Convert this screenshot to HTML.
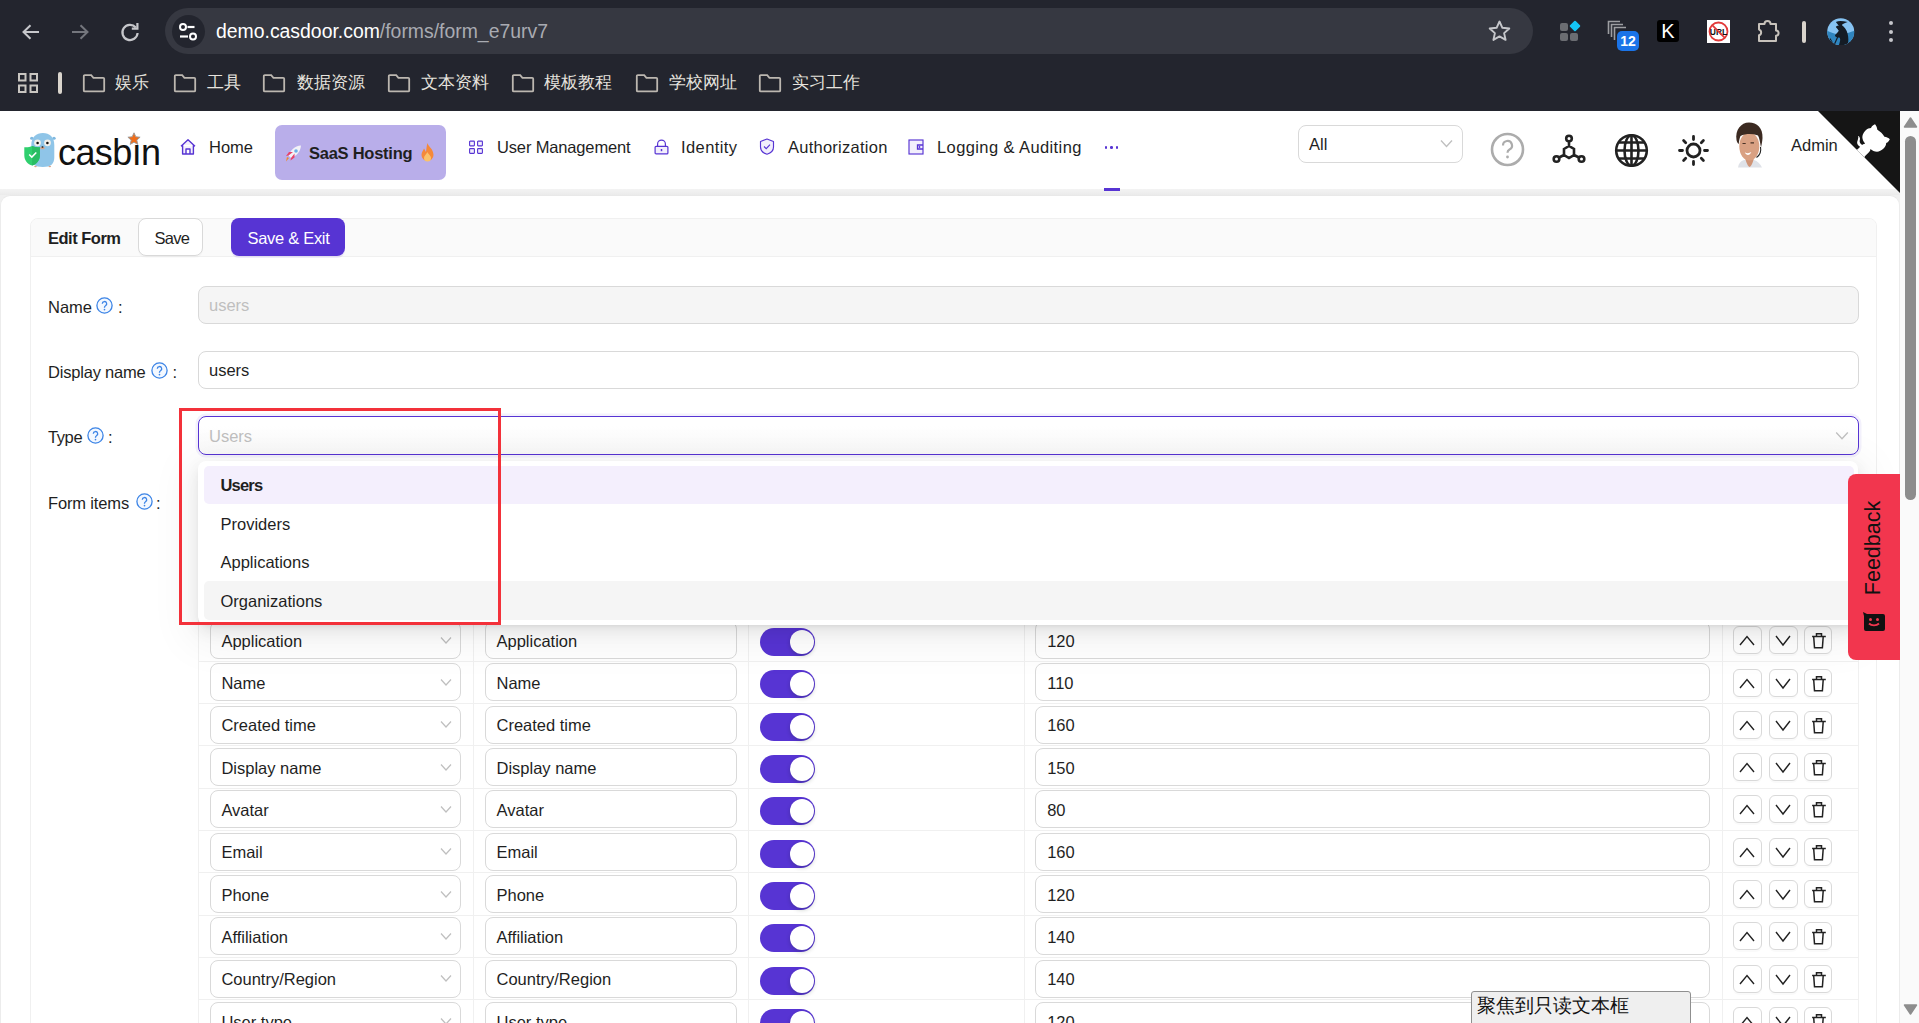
<!DOCTYPE html>
<html><head><meta charset="utf-8">
<style>
*{box-sizing:border-box;margin:0;padding:0}
html,body{width:1919px;height:1023px;overflow:hidden;background:#fff;font-family:"Liberation Sans",sans-serif;color:#1f1f1f}
.a{position:absolute}
.t{position:absolute;white-space:nowrap;line-height:1}
/* chrome */
#chrome{position:absolute;left:0;top:0;width:1919px;height:111px;background:#23252e}
#omni{position:absolute;left:165px;top:8px;width:1368px;height:46px;border-radius:23px;background:#363841}
/* page */
#page{position:absolute;left:0;top:111px;width:1900px;height:912px;background:#f0f0f0;overflow:hidden}
#hdr{position:absolute;left:0;top:0;width:1900px;height:78px;background:#fff}
#outer{position:absolute;left:0;top:84px;width:1900px;height:900px;background:#fff;border:1px solid #ececec;border-top-color:#e9e9e9;border-radius:10px}
#band{position:absolute;left:0;top:78px;width:1900px;height:6px;background:linear-gradient(#f3f3f3,#ebebeb)}
#sb{position:absolute;left:1900px;top:111px;width:19px;height:912px;background:#fafafa}
.bm{font-size:17px;color:#e6e3de}
.lbl{font-size:16.5px;color:#1f1f1f}
.sel{height:38px;border:1px solid #d9d9d9;border-radius:8px;background:#fff}
.sw{width:55px;height:28px;border-radius:14px;background:#5734d3}
.sw:after{content:"";position:absolute;left:30px;top:2px;width:24px;height:24px;border-radius:50%;background:#fff;box-shadow:0 2px 4px rgba(0,35,11,0.2)}
.btn{width:28.3px;height:28px;border:1px solid #d9d9d9;border-radius:6px;background:#fff;box-shadow:0 2px 0 rgba(0,0,0,0.02)}
.btn svg{position:absolute;left:-1px;top:-1px}
.nav{position:absolute;top:0;height:78px;font-size:16.5px;color:#1f1f1f}
</style></head><body>
<div id="chrome">
  <svg class="a" style="left:20px;top:22px" width="22" height="20" viewBox="0 0 22 20"><path d="M19 10H4M10.5 3.2L3.5 10l7 6.8" fill="none" stroke="#c6c7cb" stroke-width="2"/></svg>
  <svg class="a" style="left:69px;top:22px" width="22" height="20" viewBox="0 0 22 20"><path d="M3 10h15M11.5 3.2l7 6.8-7 6.8" fill="none" stroke="#74767d" stroke-width="2"/></svg>
  <svg class="a" style="left:119px;top:21px" width="22" height="22" viewBox="0 0 22 22"><path d="M16.8 6.5A7.6 7.6 0 1 0 18.6 12" fill="none" stroke="#c6c7cb" stroke-width="2.2"/><path d="M12.8 7.6h5.6V2" fill="none" stroke="#c6c7cb" stroke-width="2.2"/></svg>
  <div id="omni"></div>
  <div class="a" style="left:172px;top:15px;width:33px;height:33px;border-radius:50%;background:#23252e"></div>
  <svg class="a" style="left:178px;top:22px" width="20" height="20" viewBox="0 0 20 20"><circle cx="5" cy="5" r="3" fill="none" stroke="#fff" stroke-width="2"/><path d="M9.5 5h7" stroke="#fff" stroke-width="2.2"/><circle cx="15" cy="14.5" r="3" fill="none" stroke="#fff" stroke-width="2"/><path d="M2 14.5h8" stroke="#fff" stroke-width="2.2"/></svg>
  <div class="t" id="url" style="left:216px;top:21.5px;font-size:19.4px;color:#fff">demo.casdoor.com<span style="color:#a9abb2">/forms/form_e7urv7</span></div>
  <svg class="a" style="left:1487px;top:19px" width="25" height="24" viewBox="0 0 24 24"><path d="M12 2.5l2.9 6.3 6.9.7-5.2 4.6 1.5 6.8L12 17.4l-6.1 3.5 1.5-6.8-5.2-4.6 6.9-.7z" fill="none" stroke="#c6c7cb" stroke-width="1.9" stroke-linejoin="round"/></svg>
  <!-- ext grid -->
  <div class="a" style="left:1560px;top:23px;width:8px;height:8px;border-radius:2px;background:#6b6d72"></div>
  <div class="a" style="left:1560px;top:33px;width:8px;height:8px;border-radius:2px;background:#6b6d72"></div>
  <div class="a" style="left:1570px;top:33px;width:8px;height:8px;border-radius:2px;background:#6b6d72"></div>
  <div class="a" style="left:1570.5px;top:22px;width:8px;height:8px;border-radius:1px;background:#14c5f5;transform:rotate(45deg)"></div>
  <!-- tabs 12 -->
  <svg class="a" style="left:1607px;top:20px" width="26" height="26" viewBox="0 0 26 26"><path d="M1.5 14V1.5H13M4.5 17V4.5H16M7.5 20V7.5H19" fill="none" stroke="#9d9ea2" stroke-width="1.6"/></svg>
  <div class="a" style="left:1617px;top:31px;width:22px;height:20px;border-radius:5px;background:#1b74e8;color:#fff;font-weight:bold;font-size:14px;line-height:20px;text-align:center">12</div>
  <div class="a" style="left:1657px;top:20px;width:22px;height:22px;border-radius:3px;background:#000;color:#fff;font-size:20px;line-height:22px;text-align:center">K</div>
  <!-- URL ext -->
  <div class="a" style="left:1707px;top:20px;width:23px;height:23px;background:#fff"></div>
  <svg class="a" style="left:1707px;top:20px" width="23" height="23" viewBox="0 0 23 23"><circle cx="11.5" cy="11.5" r="9" fill="none" stroke="#e23a3a" stroke-width="1.8"/><text x="11.5" y="14.8" font-family="Liberation Sans" font-weight="bold" font-size="8.5" text-anchor="middle" fill="#111">URL</text><path d="M5.2 5.2l12.6 12.6" stroke="#e23a3a" stroke-width="1.8"/></svg>
  <!-- puzzle -->
  <svg class="a" style="left:1756px;top:18px" width="26" height="25" viewBox="0 0 26 25"><path d="M3 6h5.5a3 3 0 0 1 6 0H20v6.5a2.6 2.6 0 0 1 0 5.2V23H3v-5.8a2.9 2.9 0 0 0 0-5.6z" fill="none" stroke="#c7c2bb" stroke-width="2" stroke-linejoin="round"/></svg>
  <div class="a" style="left:1802px;top:20.5px;width:3.5px;height:22px;border-radius:2px;background:#d9d4cc"></div>
  <!-- profile -->
  <svg class="a" style="left:1827px;top:17.5px" width="27.5" height="27.5" viewBox="0 0 28 28"><defs><clipPath id="pc"><circle cx="14" cy="14" r="13.8"/></clipPath></defs><g clip-path="url(#pc)"><rect width="28" height="28" fill="#86c3f2"/><path d="M0 13c5 2 10 4 14 4s10-3 14-4v15H0z" fill="#2f85bf"/><path d="M9 4c3-1.5 7-1 12 0-3 1-5 2-6 3 3 2 5 5 6 9 1 4 1 8 0 12H12c1-3 2-6 1-8-2 0-4-.5-5-2 1-2 3-3 4-5-1-2-3-3-3-4 1-1 2-1 3-1z" fill="#141c25"/><path d="M3 21l4 7M11 19l-4 9" stroke="#141c25" stroke-width="1.2"/></g></svg>
  <div class="a" style="left:1889px;top:21px;width:4px;height:4px;border-radius:50%;background:#c6c7cb"></div>
  <div class="a" style="left:1889px;top:29.5px;width:4px;height:4px;border-radius:50%;background:#c6c7cb"></div>
  <div class="a" style="left:1889px;top:38px;width:4px;height:4px;border-radius:50%;background:#c6c7cb"></div>
  <!-- bookmarks -->
  <svg class="a" style="left:17px;top:72px" width="22" height="22" viewBox="0 0 22 22"><g fill="none" stroke="#c9c6c1" stroke-width="2"><rect x="2" y="2" width="6.5" height="6.5"/><rect x="13.5" y="2" width="6.5" height="6.5"/><rect x="2" y="13.5" width="6.5" height="6.5"/><rect x="13.5" y="13.5" width="6.5" height="6.5"/></g></svg>
  <div class="a" style="left:58px;top:71.5px;width:3.5px;height:22px;border-radius:2px;background:#d9d4cc"></div>
  <svg class="a" style="left:82px;top:74px" width="24" height="19" viewBox="0 0 24 19"><path d="M1.8 2.2a1 1 0 0 1 1-1h6.4l2.2 2.6h9.8a1 1 0 0 1 1 1v11.6a1 1 0 0 1-1 1H2.8a1 1 0 0 1-1-1z" fill="none" stroke="#bcb7b0" stroke-width="1.8"/></svg><div class="t bm" style="left:115px;top:74px">娱乐</div>
<svg class="a" style="left:173px;top:74px" width="24" height="19" viewBox="0 0 24 19"><path d="M1.8 2.2a1 1 0 0 1 1-1h6.4l2.2 2.6h9.8a1 1 0 0 1 1 1v11.6a1 1 0 0 1-1 1H2.8a1 1 0 0 1-1-1z" fill="none" stroke="#bcb7b0" stroke-width="1.8"/></svg><div class="t bm" style="left:207px;top:74px">工具</div>
<svg class="a" style="left:262px;top:74px" width="24" height="19" viewBox="0 0 24 19"><path d="M1.8 2.2a1 1 0 0 1 1-1h6.4l2.2 2.6h9.8a1 1 0 0 1 1 1v11.6a1 1 0 0 1-1 1H2.8a1 1 0 0 1-1-1z" fill="none" stroke="#bcb7b0" stroke-width="1.8"/></svg><div class="t bm" style="left:297px;top:74px">数据资源</div>
<svg class="a" style="left:387px;top:74px" width="24" height="19" viewBox="0 0 24 19"><path d="M1.8 2.2a1 1 0 0 1 1-1h6.4l2.2 2.6h9.8a1 1 0 0 1 1 1v11.6a1 1 0 0 1-1 1H2.8a1 1 0 0 1-1-1z" fill="none" stroke="#bcb7b0" stroke-width="1.8"/></svg><div class="t bm" style="left:421px;top:74px">文本资料</div>
<svg class="a" style="left:511px;top:74px" width="24" height="19" viewBox="0 0 24 19"><path d="M1.8 2.2a1 1 0 0 1 1-1h6.4l2.2 2.6h9.8a1 1 0 0 1 1 1v11.6a1 1 0 0 1-1 1H2.8a1 1 0 0 1-1-1z" fill="none" stroke="#bcb7b0" stroke-width="1.8"/></svg><div class="t bm" style="left:544px;top:74px">模板教程</div>
<svg class="a" style="left:635px;top:74px" width="24" height="19" viewBox="0 0 24 19"><path d="M1.8 2.2a1 1 0 0 1 1-1h6.4l2.2 2.6h9.8a1 1 0 0 1 1 1v11.6a1 1 0 0 1-1 1H2.8a1 1 0 0 1-1-1z" fill="none" stroke="#bcb7b0" stroke-width="1.8"/></svg><div class="t bm" style="left:669px;top:74px">学校网址</div>
<svg class="a" style="left:758px;top:74px" width="24" height="19" viewBox="0 0 24 19"><path d="M1.8 2.2a1 1 0 0 1 1-1h6.4l2.2 2.6h9.8a1 1 0 0 1 1 1v11.6a1 1 0 0 1-1 1H2.8a1 1 0 0 1-1-1z" fill="none" stroke="#bcb7b0" stroke-width="1.8"/></svg><div class="t bm" style="left:792px;top:74px">实习工作</div>
</div>
<div id="page">
  <div id="hdr">
  <!-- gopher logo -->
  <svg class="a" style="left:23px;top:19px" width="34" height="40" viewBox="23 130 34 40">
    <ellipse cx="31.8" cy="138.3" rx="1.7" ry="1.5" fill="#7fb8e0"/><ellipse cx="54" cy="138.3" rx="1.7" ry="1.5" fill="#7fb8e0"/>
    <path d="M31.3 145c0-8 5-12 11.6-12S54.3 137 54.3 145v12c0 7-3.5 10-11.5 10s-11.5-3-11.5-10z" fill="#8fc5e8"/>
    <circle cx="37.5" cy="142.8" r="3.4" fill="#f2efe9"/><circle cx="47.5" cy="142.8" r="3.4" fill="#f2efe9"/>
    <circle cx="37.6" cy="143" r="1.3" fill="#111"/><circle cx="47.4" cy="143" r="1.3" fill="#111"/>
    <ellipse cx="42.5" cy="148" rx="2.3" ry="1.3" fill="#d9a58a"/><ellipse cx="42.5" cy="147" rx="1" ry=".7" fill="#111"/>
    <ellipse cx="35.5" cy="166.5" rx="1.3" ry=".8" fill="#d9a58a"/><ellipse cx="49.8" cy="166.5" rx="1.3" ry=".8" fill="#d9a58a"/>
    <path d="M24.3 147.2c3 .3 5.5-.2 8-1.2 2.5 1 5 1.5 7.6 1.2v8c0 5.5-3.5 9-7.8 10.3-4.3-1.3-7.8-4.8-7.8-10.3z" fill="#2fcf6e"/>
    <path d="M32.1 146c2.5 1 5 1.5 7.8 1.2v8c0 5.5-3.5 9-7.8 10.3z" fill="#29bd63"/>
    <path d="M29.2 154.5l2.6 2.6 4.5-4.6" fill="none" stroke="#fff" stroke-width="1.5"/>
  </svg>
  <div class="t" id="casbin" style="left:58px;top:24px;font-size:36px;color:#111;letter-spacing:-0.6px">casbın</div>
  <svg class="a" style="left:127px;top:21px" width="14" height="14" viewBox="0 0 14 14"><path d="M7 .8l1.8 4 4.3.4-3.3 2.9 1 4.3L7 10.2l-3.8 2.2 1-4.3L.9 5.2l4.3-.4z" fill="#f06d1a" stroke="#999" stroke-width=".9"/></svg>
  <!-- nav -->
  <svg class="a" style="left:179px;top:27px" width="18" height="18" viewBox="0 0 18 18"><path d="M2 8.2L9 1.8l7 6.4M3.6 6.9V16h10.8V6.9M7 16v-5h4v5" fill="#f3effc" stroke="#5734d3" stroke-width="1.4" stroke-linejoin="round"/></svg>
  <div class="t nav" style="left:209px;top:28px">Home</div>
  <div class="a" style="left:275px;top:14px;width:171px;height:55px;border-radius:7px;background:#b9aeea"></div>
  <svg class="a" style="left:284px;top:33px" width="19" height="19" viewBox="0 0 19 19"><path d="M5 14l-3 3.5 1-4.5z" fill="#f08a2c"/><path d="M4.5 11.5c2-5 6-9.5 12.5-10-.5 6.5-5 10.5-10 12.5z" fill="#f2f2f7"/><path d="M4.5 11.5l-2.5.5 3-4h4zM7 14l-.5 2.5 4-3v-4z" fill="#e8436a"/><circle cx="12" cy="7" r="1.8" fill="#6bb0e8"/></svg>
  <div class="t nav" style="left:309px;top:34px;font-weight:bold;letter-spacing:-0.25px">SaaS Hosting</div>
  <svg class="a" style="left:420px;top:31px" width="15" height="21" viewBox="0 0 15 21"><path d="M7.5 1c1 4 6 6 6 12a6 6 0 0 1-12 0c0-3 2-5 2.5-6.5C5 8 5.5 9 6 10c.5-3 .5-6 1.5-9z" fill="#f5893a"/><path d="M7.5 10c.5 2 3.5 3.5 3.5 6a3.5 3.5 0 0 1-7 0c0-2 2-3.5 3.5-6z" fill="#fbc26a"/></svg>
  <svg class="a" style="left:468px;top:29px" width="16" height="15" viewBox="0 0 16 15"><g fill="#f3effc" stroke="#5734d3" stroke-width="1.1"><rect x="1.6" y="1.1" width="4.8" height="4.8" rx=".6"/><rect x="9.6" y="1.1" width="4.8" height="4.8" rx=".6"/><rect x="1.6" y="8.6" width="4.8" height="4.8" rx=".6"/><rect x="9.6" y="8.6" width="4.8" height="4.8" rx=".6"/></g></svg>
  <div class="t nav" style="left:497px;top:28px;letter-spacing:-0.15px">User Management</div>
  <svg class="a" style="left:654px;top:28px" width="15" height="16" viewBox="0 0 15 16"><path d="M3.6 7.3V5a3.9 3.9 0 0 1 7.8 0v2.3" fill="none" stroke="#5734d3" stroke-width="1.2"/><rect x="1.1" y="7.3" width="12.8" height="7.6" rx="1" fill="#f3effc" stroke="#5734d3" stroke-width="1.2"/><path d="M7.5 10v2.2" stroke="#5734d3" stroke-width="1.5"/></svg>
  <div class="t nav" style="left:681px;top:28px;letter-spacing:0.4px">Identity</div>
  <svg class="a" style="left:759px;top:27px" width="16" height="17" viewBox="0 0 16 17"><path d="M8 1l6.5 2.5v5.5c0 3.5-3 6.2-6.5 7.2C4.5 15.2 1.5 12.5 1.5 9V3.5z" fill="#f2effc" stroke="#5734d3" stroke-width="1.15" stroke-linejoin="round"/><path d="M5 8.5l2.2 2.2L11 6.6" fill="none" stroke="#5734d3" stroke-width="1.1"/></svg>
  <div class="t nav" style="left:788px;top:28px;letter-spacing:0.25px">Authorization</div>
  <svg class="a" style="left:908px;top:28px" width="16" height="16" viewBox="0 0 16 16"><rect x="1" y="1" width="14" height="14" fill="#f2effc" stroke="#5734d3" stroke-width="1.15"/><path d="M15 6H9.5v4H15" fill="none" stroke="#5734d3" stroke-width="1.3"/><circle cx="11.5" cy="8" r=".9" fill="#5734d3"/></svg>
  <div class="t nav" style="left:937px;top:28px;letter-spacing:0.4px">Logging &amp; Auditing</div>
  <div class="a" style="left:1104.8px;top:35px;width:2.6px;height:2.6px;border-radius:50%;background:#5734d3"></div><div class="a" style="left:1110.2px;top:35px;width:2.6px;height:2.6px;border-radius:50%;background:#5734d3"></div><div class="a" style="left:1115.6px;top:35px;width:2.6px;height:2.6px;border-radius:50%;background:#5734d3"></div>
  <div class="a" style="left:1104px;top:77px;width:16px;height:3px;background:#5734d3;z-index:3"></div>
  <!-- right -->
  <div class="a" style="left:1298px;top:14px;width:165px;height:38px;border:1px solid #d9d9d9;border-radius:8px;background:#fff"></div>
  <div class="t nav" style="left:1309px;top:25px">All</div>
  <svg class="a" style="left:1440px;top:28px" width="13" height="9" viewBox="0 0 13 9"><path d="M1 1.5l5.5 6 5.5-6" fill="none" stroke="#bfbfbf" stroke-width="1.3"/></svg>
  <svg class="a" style="left:1490px;top:21px" width="35" height="35" viewBox="0 0 35 35"><circle cx="17.5" cy="17.5" r="15.5" fill="none" stroke="#acacac" stroke-width="2.6"/><path d="M13 13.5a4.5 4.5 0 1 1 6.5 4c-1.5.8-2 1.6-2 3.3" fill="none" stroke="#acacac" stroke-width="2.2"/><circle cx="17.5" cy="25" r="1.4" fill="#acacac"/></svg>
  <svg class="a" style="left:1552px;top:23px" width="34" height="31" viewBox="0 0 34 31"><g fill="none" stroke="#222" stroke-width="2.6"><circle cx="17" cy="4.5" r="2.8"/><circle cx="4.5" cy="25" r="2.8"/><circle cx="29.5" cy="25" r="2.8"/><path d="M17 7.3v4.7M12 15l5-3 5 3v6l-5 3-5-3zM7 23.5l5-2.5M27 23.5l-5-2.5"/></g></svg>
  <svg class="a" style="left:1614px;top:22px" width="35" height="35" viewBox="0 0 35 35"><g fill="none" stroke="#222" stroke-width="2.6"><circle cx="17.5" cy="17.5" r="15.3"/><ellipse cx="17.5" cy="17.5" rx="7" ry="15.3"/><path d="M17.5 2.2v30.6M2.2 17.5h30.6M4.5 9.5h26M4.5 25.5h26"/></g></svg>
  <svg class="a" style="left:1677px;top:23px" width="33" height="33" viewBox="0 0 33 33"><g fill="none" stroke="#222" stroke-width="2.8" stroke-linecap="round"><circle cx="16.5" cy="16.5" r="6.5"/><path d="M16.5 2.5v3M16.5 27.5v3M2.5 16.5h3M27.5 16.5h3M6.6 6.6l2.1 2.1M24.3 24.3l2.1 2.1M6.6 26.4l2.1-2.1M24.3 8.7l2.1-2.1"/></g></svg>
  <!-- avatar -->
  <svg class="a" style="left:1735px;top:11px" width="30" height="46" viewBox="1735 122 30 46">
    <path d="M1738 167.5c.5-4 2.5-6.5 6-7.5h10c3.5 1 6 3.5 8 7.5z" fill="#dfe2e8"/>
    <path d="M1744.5 156c1 3 2.5 10 5 11 2.5-1 4-7 5-11z" fill="#cf9476"/>
    <ellipse cx="1749.3" cy="146.5" rx="10" ry="14" fill="#d9a183"/>
    <path d="M1736.5 140C1735 130 1741 122.5 1749 122.5 1757 122.5 1763 128 1762.5 138 1762.3 142 1761.5 145 1761 147.5 1760 142 1759.5 138 1758 135.5 1752 133.5 1746 133.5 1740.5 136 1739.5 138 1739 141 1738.8 144 1737.5 143 1736.7 141.5 1736.5 140Z" fill="#3b2a21"/>
    <path d="M1742.5 143.5h3.2M1750.5 142.8h3.5" stroke="#4a3327" stroke-width="1.2"/>
    <path d="M1744.8 152.3c1.8 1.3 4.5 1.3 6.5-.2-.8 2-2 2.8-3.3 2.8s-2.5-.8-3.2-2.6z" fill="#fff"/>
    <path d="M1760.5 147c.8 4-.5 8-4 10.5" fill="none" stroke="#222" stroke-width="1.1"/>
  </svg>
  <div class="t nav" style="left:1791px;top:26px">Admin</div>
  <!-- github corner -->
  <svg class="a" style="left:1818px;top:0;z-index:5" width="83" height="83" viewBox="0 0 250 250"><path d="M0 0L250 250V0z" fill="#151515"/><path d="M127.4 110.3c-2 .6-6.6 2.9-6.6 2.9 3.1-.7 6.2-1.2 8.3-.1 2.6 1.6 3.4 4.3 4.7 6.3 0 0 1.8 2.6 3.5 3.4 3.6 1.7 5.3-.6 5.3-.6-3.5 0-3.8-2.7-5.9-5.3-2.5-3-4.1-3.7-6.4-4.8" fill="#fff" transform="translate(0 0)"/><path d="M115 115C114.9 115.1 118.7 116.5 119.8 115.4L133.7 101.6C136.9 99.2 139.9 98.4 142.2 98.6 133.8 88 127.5 74.4 143.8 58 148.5 53.4 154 51.2 159.7 51 160.3 49.4 163.2 43.6 171.4 40.1 171.4 40.1 176.1 42.5 178.8 56.2 183.1 58.6 187.2 61.8 190.9 65.4 194.5 69 197.7 73.2 200.1 77.6 213.8 80.2 216.3 84.9 216.3 84.9 212.7 93.1 206.9 96 205.4 96.6 205.1 102.4 203 107.8 198.3 112.5 181.9 128.9 168.3 122.5 157.7 114.1 157.9 116.9 156.7 120.9 152.7 124.9L141 136.5C139.8 137.7 141.6 141.9 141.8 141.8Z" fill="#fff"/><path d="M128.3 109.4c-14.8-9.4-9.4-18.8-9.4-18.8 1.7-4.6 2.5-11.5 2.5-11.5-1.3-6.8 2.7-1.8 2.7-1.8 3.6 4.3 2 9.3 2 9.3-2.8 10.3 5.3 14.9 9.1 16.2" fill="#fff"/></svg>
</div>
  <div id="band"></div>
  <div id="outer"></div>
</div>
<div id="sb"></div>
<svg width="0" height="0" style="position:absolute"><defs>
<g id="iup"><path d="M7 19L14 10.5 21 19" fill="none" stroke="#222" stroke-width="1.4"/></g>
<g id="idn"><path d="M7 10L14 19 21 10" fill="none" stroke="#222" stroke-width="1.4"/></g>
<g id="idel"><path d="M8.1 10.6h13.7M12.5 10.4V7.8h5v2.6M9.7 10.8l.8 11h7.9l.8-11" fill="none" stroke="#222" stroke-width="1.5"/></g>
</defs></svg>
<div class="a" style="left:30px;top:217.5px;width:1846.5px;height:900px;border:1px solid #f0f0f0;border-radius:8px;background:#fff"></div>
<div class="a" style="left:31px;top:218.5px;width:1844.5px;height:38px;border-bottom:1px solid #f0f0f0;border-radius:7px 7px 0 0;background:#fafafa"></div>
<div class="t lbl" style="left:48px;top:229.7px;font-weight:bold;letter-spacing:-0.5px">Edit Form</div>
<div class="a" style="left:138.4px;top:218.3px;width:65px;height:37.5px;border:1px solid #d9d9d9;border-radius:8px;background:#fff;box-shadow:0 2px 0 rgba(0,0,0,0.02)"></div>
<div class="t lbl" style="left:154.4px;top:229.7px;letter-spacing:-0.7px">Save</div>
<div class="a" style="left:231px;top:218.3px;width:113.6px;height:37.5px;border-radius:8px;background:#5734d3;box-shadow:0 2px 0 rgba(87,52,211,0.1)"></div>
<div class="t lbl" style="left:247.5px;top:229.7px;color:#fff;letter-spacing:-0.3px">Save &amp; Exit</div>
<div class="t lbl" style="left:48px;top:299px">Name</div>
<svg class="a" style="left:96.1px;top:297.2px" width="17" height="17" viewBox="0 0 17 17"><circle cx="8.5" cy="8.5" r="7.6" fill="#f3f8ff" stroke="#3c84e6" stroke-width="1.3"/><path d="M6.3 6.7a2.2 2.2 0 1 1 3.2 2c-.7.4-1 .8-1 1.6v.5" fill="none" stroke="#3c84e6" stroke-width="1.3"/><circle cx="8.5" cy="12.6" r=".85" fill="#3c84e6"/></svg>
<div class="t lbl" style="left:118px;top:299px">:</div>
<div class="t lbl" style="left:48px;top:364px;letter-spacing:-0.2px">Display name</div>
<svg class="a" style="left:151.3px;top:362.2px" width="17" height="17" viewBox="0 0 17 17"><circle cx="8.5" cy="8.5" r="7.6" fill="#f3f8ff" stroke="#3c84e6" stroke-width="1.3"/><path d="M6.3 6.7a2.2 2.2 0 1 1 3.2 2c-.7.4-1 .8-1 1.6v.5" fill="none" stroke="#3c84e6" stroke-width="1.3"/><circle cx="8.5" cy="12.6" r=".85" fill="#3c84e6"/></svg>
<div class="t lbl" style="left:172.6px;top:364px">:</div>
<div class="t lbl" style="left:48px;top:429px;letter-spacing:-0.4px">Type</div>
<svg class="a" style="left:87.1px;top:427.2px" width="17" height="17" viewBox="0 0 17 17"><circle cx="8.5" cy="8.5" r="7.6" fill="#f3f8ff" stroke="#3c84e6" stroke-width="1.3"/><path d="M6.3 6.7a2.2 2.2 0 1 1 3.2 2c-.7.4-1 .8-1 1.6v.5" fill="none" stroke="#3c84e6" stroke-width="1.3"/><circle cx="8.5" cy="12.6" r=".85" fill="#3c84e6"/></svg>
<div class="t lbl" style="left:108px;top:429px">:</div>
<div class="t lbl" style="left:48px;top:495px;letter-spacing:-0.15px">Form items</div>
<svg class="a" style="left:135.5px;top:493.2px" width="17" height="17" viewBox="0 0 17 17"><circle cx="8.5" cy="8.5" r="7.6" fill="#f3f8ff" stroke="#3c84e6" stroke-width="1.3"/><path d="M6.3 6.7a2.2 2.2 0 1 1 3.2 2c-.7.4-1 .8-1 1.6v.5" fill="none" stroke="#3c84e6" stroke-width="1.3"/><circle cx="8.5" cy="12.6" r=".85" fill="#3c84e6"/></svg>
<div class="t lbl" style="left:156px;top:495px">:</div>
<div class="a" style="left:198px;top:286px;width:1661px;height:37.5px;border:1px solid #d9d9d9;border-radius:8px;background:#f5f5f5"></div>
<div class="t lbl" style="left:209px;top:296.5px;color:#bfbfbf">users</div>
<div class="a" style="left:198px;top:351.4px;width:1661px;height:37.8px;border:1px solid #d9d9d9;border-radius:8px;background:#fff"></div>
<div class="t lbl" style="left:209px;top:362px">users</div>
<div class="a" style="left:198px;top:416px;width:1661px;height:38.7px;border:1.5px solid #5734d3;border-radius:8px;background:linear-gradient(#fff 25%,#f8f8f8);box-shadow:0 0 0 2.5px rgba(87,52,211,0.07)"></div>
<div class="t lbl" style="left:209px;top:427.7px;color:#bfbfbf">Users</div>
<svg class="a" style="left:1835px;top:431px" width="14" height="10" viewBox="0 0 14 10"><path d="M1.2 1.5L7 7.8l5.8-6.3" fill="none" stroke="#bfbfbf" stroke-width="1.3"/></svg>
<!-- table -->
<div class="a" style="left:198px;top:480px;width:1px;height:600px;background:#f0f0f0"></div>
<div class="a" style="left:1858px;top:480px;width:1px;height:600px;background:#f0f0f0"></div>
<div class="a" style="left:473px;top:480px;width:1px;height:600px;background:#f0f0f0"></div>
<div class="a" style="left:747.8px;top:480px;width:1px;height:600px;background:#f0f0f0"></div>
<div class="a" style="left:1023.5px;top:480px;width:1px;height:600px;background:#f0f0f0"></div>
<div class="a" style="left:1721.5px;top:480px;width:1px;height:600px;background:#f0f0f0"></div>
<div class="a" style="left:198.5px;top:660.80px;width:1660px;height:1px;background:#f0f0f0"></div>
<div class="a sel" style="left:209.8px;top:620.87px;width:251.6px"></div>
<div class="t lbl" style="left:221.4px;top:632.67px">Application</div>
<svg class="a" style="left:440px;top:635.77px" width="12" height="9" viewBox="0 0 12 9"><path d="M1 1.5l5 5.5 5-5.5" fill="none" stroke="#bfbfbf" stroke-width="1.2"/></svg>
<div class="a sel" style="left:485.2px;top:620.87px;width:251.5px"></div>
<div class="t lbl" style="left:496.5px;top:632.67px">Application</div>
<div class="a sw" style="left:760px;top:627.87px"></div>
<div class="a sel" style="left:1035.2px;top:620.87px;width:674.5px"></div>
<div class="t lbl" style="left:1047.2px;top:632.67px">120</div>
<div class="a btn" style="left:1733.3px;top:626.17px"><svg width="28" height="28" viewBox="0 0 28 28"><use href="#iup"/></svg></div>
<div class="a btn" style="left:1769.4px;top:626.17px"><svg width="28" height="28" viewBox="0 0 28 28"><use href="#idn"/></svg></div>
<div class="a btn" style="left:1804.2px;top:626.17px"><svg width="28" height="28" viewBox="0 0 28 28"><use href="#idel"/></svg></div>
<div class="a" style="left:198.5px;top:703.13px;width:1660px;height:1px;background:#f0f0f0"></div>
<div class="a sel" style="left:209.8px;top:663.20px;width:251.6px"></div>
<div class="t lbl" style="left:221.4px;top:675.00px">Name</div>
<svg class="a" style="left:440px;top:678.10px" width="12" height="9" viewBox="0 0 12 9"><path d="M1 1.5l5 5.5 5-5.5" fill="none" stroke="#bfbfbf" stroke-width="1.2"/></svg>
<div class="a sel" style="left:485.2px;top:663.20px;width:251.5px"></div>
<div class="t lbl" style="left:496.5px;top:675.00px">Name</div>
<div class="a sw" style="left:760px;top:670.20px"></div>
<div class="a sel" style="left:1035.2px;top:663.20px;width:674.5px"></div>
<div class="t lbl" style="left:1047.2px;top:675.00px">110</div>
<div class="a btn" style="left:1733.3px;top:668.50px"><svg width="28" height="28" viewBox="0 0 28 28"><use href="#iup"/></svg></div>
<div class="a btn" style="left:1769.4px;top:668.50px"><svg width="28" height="28" viewBox="0 0 28 28"><use href="#idn"/></svg></div>
<div class="a btn" style="left:1804.2px;top:668.50px"><svg width="28" height="28" viewBox="0 0 28 28"><use href="#idel"/></svg></div>
<div class="a" style="left:198.5px;top:745.46px;width:1660px;height:1px;background:#f0f0f0"></div>
<div class="a sel" style="left:209.8px;top:705.53px;width:251.6px"></div>
<div class="t lbl" style="left:221.4px;top:717.33px">Created time</div>
<svg class="a" style="left:440px;top:720.43px" width="12" height="9" viewBox="0 0 12 9"><path d="M1 1.5l5 5.5 5-5.5" fill="none" stroke="#bfbfbf" stroke-width="1.2"/></svg>
<div class="a sel" style="left:485.2px;top:705.53px;width:251.5px"></div>
<div class="t lbl" style="left:496.5px;top:717.33px">Created time</div>
<div class="a sw" style="left:760px;top:712.53px"></div>
<div class="a sel" style="left:1035.2px;top:705.53px;width:674.5px"></div>
<div class="t lbl" style="left:1047.2px;top:717.33px">160</div>
<div class="a btn" style="left:1733.3px;top:710.83px"><svg width="28" height="28" viewBox="0 0 28 28"><use href="#iup"/></svg></div>
<div class="a btn" style="left:1769.4px;top:710.83px"><svg width="28" height="28" viewBox="0 0 28 28"><use href="#idn"/></svg></div>
<div class="a btn" style="left:1804.2px;top:710.83px"><svg width="28" height="28" viewBox="0 0 28 28"><use href="#idel"/></svg></div>
<div class="a" style="left:198.5px;top:787.79px;width:1660px;height:1px;background:#f0f0f0"></div>
<div class="a sel" style="left:209.8px;top:747.86px;width:251.6px"></div>
<div class="t lbl" style="left:221.4px;top:759.66px">Display name</div>
<svg class="a" style="left:440px;top:762.76px" width="12" height="9" viewBox="0 0 12 9"><path d="M1 1.5l5 5.5 5-5.5" fill="none" stroke="#bfbfbf" stroke-width="1.2"/></svg>
<div class="a sel" style="left:485.2px;top:747.86px;width:251.5px"></div>
<div class="t lbl" style="left:496.5px;top:759.66px">Display name</div>
<div class="a sw" style="left:760px;top:754.86px"></div>
<div class="a sel" style="left:1035.2px;top:747.86px;width:674.5px"></div>
<div class="t lbl" style="left:1047.2px;top:759.66px">150</div>
<div class="a btn" style="left:1733.3px;top:753.16px"><svg width="28" height="28" viewBox="0 0 28 28"><use href="#iup"/></svg></div>
<div class="a btn" style="left:1769.4px;top:753.16px"><svg width="28" height="28" viewBox="0 0 28 28"><use href="#idn"/></svg></div>
<div class="a btn" style="left:1804.2px;top:753.16px"><svg width="28" height="28" viewBox="0 0 28 28"><use href="#idel"/></svg></div>
<div class="a" style="left:198.5px;top:830.12px;width:1660px;height:1px;background:#f0f0f0"></div>
<div class="a sel" style="left:209.8px;top:790.19px;width:251.6px"></div>
<div class="t lbl" style="left:221.4px;top:801.99px">Avatar</div>
<svg class="a" style="left:440px;top:805.09px" width="12" height="9" viewBox="0 0 12 9"><path d="M1 1.5l5 5.5 5-5.5" fill="none" stroke="#bfbfbf" stroke-width="1.2"/></svg>
<div class="a sel" style="left:485.2px;top:790.19px;width:251.5px"></div>
<div class="t lbl" style="left:496.5px;top:801.99px">Avatar</div>
<div class="a sw" style="left:760px;top:797.19px"></div>
<div class="a sel" style="left:1035.2px;top:790.19px;width:674.5px"></div>
<div class="t lbl" style="left:1047.2px;top:801.99px">80</div>
<div class="a btn" style="left:1733.3px;top:795.49px"><svg width="28" height="28" viewBox="0 0 28 28"><use href="#iup"/></svg></div>
<div class="a btn" style="left:1769.4px;top:795.49px"><svg width="28" height="28" viewBox="0 0 28 28"><use href="#idn"/></svg></div>
<div class="a btn" style="left:1804.2px;top:795.49px"><svg width="28" height="28" viewBox="0 0 28 28"><use href="#idel"/></svg></div>
<div class="a" style="left:198.5px;top:872.45px;width:1660px;height:1px;background:#f0f0f0"></div>
<div class="a sel" style="left:209.8px;top:832.52px;width:251.6px"></div>
<div class="t lbl" style="left:221.4px;top:844.32px">Email</div>
<svg class="a" style="left:440px;top:847.42px" width="12" height="9" viewBox="0 0 12 9"><path d="M1 1.5l5 5.5 5-5.5" fill="none" stroke="#bfbfbf" stroke-width="1.2"/></svg>
<div class="a sel" style="left:485.2px;top:832.52px;width:251.5px"></div>
<div class="t lbl" style="left:496.5px;top:844.32px">Email</div>
<div class="a sw" style="left:760px;top:839.52px"></div>
<div class="a sel" style="left:1035.2px;top:832.52px;width:674.5px"></div>
<div class="t lbl" style="left:1047.2px;top:844.32px">160</div>
<div class="a btn" style="left:1733.3px;top:837.82px"><svg width="28" height="28" viewBox="0 0 28 28"><use href="#iup"/></svg></div>
<div class="a btn" style="left:1769.4px;top:837.82px"><svg width="28" height="28" viewBox="0 0 28 28"><use href="#idn"/></svg></div>
<div class="a btn" style="left:1804.2px;top:837.82px"><svg width="28" height="28" viewBox="0 0 28 28"><use href="#idel"/></svg></div>
<div class="a" style="left:198.5px;top:914.78px;width:1660px;height:1px;background:#f0f0f0"></div>
<div class="a sel" style="left:209.8px;top:874.85px;width:251.6px"></div>
<div class="t lbl" style="left:221.4px;top:886.65px">Phone</div>
<svg class="a" style="left:440px;top:889.75px" width="12" height="9" viewBox="0 0 12 9"><path d="M1 1.5l5 5.5 5-5.5" fill="none" stroke="#bfbfbf" stroke-width="1.2"/></svg>
<div class="a sel" style="left:485.2px;top:874.85px;width:251.5px"></div>
<div class="t lbl" style="left:496.5px;top:886.65px">Phone</div>
<div class="a sw" style="left:760px;top:881.85px"></div>
<div class="a sel" style="left:1035.2px;top:874.85px;width:674.5px"></div>
<div class="t lbl" style="left:1047.2px;top:886.65px">120</div>
<div class="a btn" style="left:1733.3px;top:880.15px"><svg width="28" height="28" viewBox="0 0 28 28"><use href="#iup"/></svg></div>
<div class="a btn" style="left:1769.4px;top:880.15px"><svg width="28" height="28" viewBox="0 0 28 28"><use href="#idn"/></svg></div>
<div class="a btn" style="left:1804.2px;top:880.15px"><svg width="28" height="28" viewBox="0 0 28 28"><use href="#idel"/></svg></div>
<div class="a" style="left:198.5px;top:957.11px;width:1660px;height:1px;background:#f0f0f0"></div>
<div class="a sel" style="left:209.8px;top:917.18px;width:251.6px"></div>
<div class="t lbl" style="left:221.4px;top:928.98px">Affiliation</div>
<svg class="a" style="left:440px;top:932.08px" width="12" height="9" viewBox="0 0 12 9"><path d="M1 1.5l5 5.5 5-5.5" fill="none" stroke="#bfbfbf" stroke-width="1.2"/></svg>
<div class="a sel" style="left:485.2px;top:917.18px;width:251.5px"></div>
<div class="t lbl" style="left:496.5px;top:928.98px">Affiliation</div>
<div class="a sw" style="left:760px;top:924.18px"></div>
<div class="a sel" style="left:1035.2px;top:917.18px;width:674.5px"></div>
<div class="t lbl" style="left:1047.2px;top:928.98px">140</div>
<div class="a btn" style="left:1733.3px;top:922.48px"><svg width="28" height="28" viewBox="0 0 28 28"><use href="#iup"/></svg></div>
<div class="a btn" style="left:1769.4px;top:922.48px"><svg width="28" height="28" viewBox="0 0 28 28"><use href="#idn"/></svg></div>
<div class="a btn" style="left:1804.2px;top:922.48px"><svg width="28" height="28" viewBox="0 0 28 28"><use href="#idel"/></svg></div>
<div class="a" style="left:198.5px;top:999.44px;width:1660px;height:1px;background:#f0f0f0"></div>
<div class="a sel" style="left:209.8px;top:959.51px;width:251.6px"></div>
<div class="t lbl" style="left:221.4px;top:971.31px">Country/Region</div>
<svg class="a" style="left:440px;top:974.41px" width="12" height="9" viewBox="0 0 12 9"><path d="M1 1.5l5 5.5 5-5.5" fill="none" stroke="#bfbfbf" stroke-width="1.2"/></svg>
<div class="a sel" style="left:485.2px;top:959.51px;width:251.5px"></div>
<div class="t lbl" style="left:496.5px;top:971.31px">Country/Region</div>
<div class="a sw" style="left:760px;top:966.51px"></div>
<div class="a sel" style="left:1035.2px;top:959.51px;width:674.5px"></div>
<div class="t lbl" style="left:1047.2px;top:971.31px">140</div>
<div class="a btn" style="left:1733.3px;top:964.81px"><svg width="28" height="28" viewBox="0 0 28 28"><use href="#iup"/></svg></div>
<div class="a btn" style="left:1769.4px;top:964.81px"><svg width="28" height="28" viewBox="0 0 28 28"><use href="#idn"/></svg></div>
<div class="a btn" style="left:1804.2px;top:964.81px"><svg width="28" height="28" viewBox="0 0 28 28"><use href="#idel"/></svg></div>
<div class="a" style="left:198.5px;top:1041.77px;width:1660px;height:1px;background:#f0f0f0"></div>
<div class="a sel" style="left:209.8px;top:1001.84px;width:251.6px"></div>
<div class="t lbl" style="left:221.4px;top:1013.64px">User type</div>
<svg class="a" style="left:440px;top:1016.74px" width="12" height="9" viewBox="0 0 12 9"><path d="M1 1.5l5 5.5 5-5.5" fill="none" stroke="#bfbfbf" stroke-width="1.2"/></svg>
<div class="a sel" style="left:485.2px;top:1001.84px;width:251.5px"></div>
<div class="t lbl" style="left:496.5px;top:1013.64px">User type</div>
<div class="a sw" style="left:760px;top:1008.84px"></div>
<div class="a sel" style="left:1035.2px;top:1001.84px;width:674.5px"></div>
<div class="t lbl" style="left:1047.2px;top:1013.64px">120</div>
<div class="a btn" style="left:1733.3px;top:1007.14px"><svg width="28" height="28" viewBox="0 0 28 28"><use href="#iup"/></svg></div>
<div class="a btn" style="left:1769.4px;top:1007.14px"><svg width="28" height="28" viewBox="0 0 28 28"><use href="#idn"/></svg></div>
<div class="a btn" style="left:1804.2px;top:1007.14px"><svg width="28" height="28" viewBox="0 0 28 28"><use href="#idel"/></svg></div>
<div class="a" style="left:198px;top:460.5px;width:1660px;height:164.3px;border-radius:8px;background:#fff;box-shadow:0 6px 16px 0 rgba(0,0,0,0.08),0 3px 6px -4px rgba(0,0,0,0.12),0 9px 40px 12px rgba(0,0,0,0.05)"></div>
<div class="a" style="left:204px;top:466px;width:1650px;height:37.6px;border-radius:5px;background:#f4effd"></div>
<div class="a" style="left:204px;top:581.3px;width:1650px;height:38.4px;border-radius:5px;background:#f5f5f5"></div>
<div class="t lbl" style="left:220.5px;top:477px;font-weight:bold;letter-spacing:-0.8px">Users</div>
<div class="t lbl" style="left:220.5px;top:516.3px;">Providers</div>
<div class="t lbl" style="left:220.5px;top:554px;">Applications</div>
<div class="t lbl" style="left:220.5px;top:592.6px;">Organizations</div>
<div class="a" style="left:179px;top:408px;width:322px;height:217px;border:3px solid #f3313a"></div>
<div class="a" style="left:1848px;top:474px;width:52px;height:186px;border-radius:8px 0 0 8px;background:#f2364e"></div>
<div class="t" style="left:1874px;top:548px;font-size:21.5px;color:#111;transform:translate(-50%,-50%) rotate(-90deg)">Feedback</div>
<svg class="a" style="left:1862px;top:611px" width="24" height="21" viewBox="0 0 24 21"><path d="M1 1l4 2h16a2 2 0 0 1 2 2v13a2 2 0 0 1-2 2H4a2 2 0 0 1-2-2V5z" fill="#111"/><circle cx="8.5" cy="8.5" r="1.5" fill="#f2364e"/><circle cx="15.5" cy="8.5" r="1.5" fill="#f2364e"/><path d="M7 12.5c2.5 2.5 7.5 2.5 10 0" fill="none" stroke="#f2364e" stroke-width="1.8"/></svg>
<div class="a" style="left:1471px;top:990.5px;width:220px;height:40px;border:1px solid #8f8f8f;border-radius:3px;background:#efefef"></div>
<div class="t" style="left:1477px;top:997px;font-size:18.8px;color:#111">聚焦到只读文本框</div>
<svg class="a" style="left:1903px;top:116px" width="15" height="13" viewBox="0 0 15 13"><path d="M7.5 2L13.5 11H1.5z" fill="#8d8d8d" stroke="#8d8d8d" stroke-width="1.5" stroke-linejoin="round"/></svg>
<div class="a" style="left:1905px;top:136px;width:11px;height:364px;border-radius:5.5px;background:#8d8d8d"></div>
<svg class="a" style="left:1903px;top:1003px" width="15" height="13" viewBox="0 0 15 13"><path d="M7.5 11L13.5 2H1.5z" fill="#8d8d8d" stroke="#8d8d8d" stroke-width="1.5" stroke-linejoin="round"/></svg>
</body></html>
